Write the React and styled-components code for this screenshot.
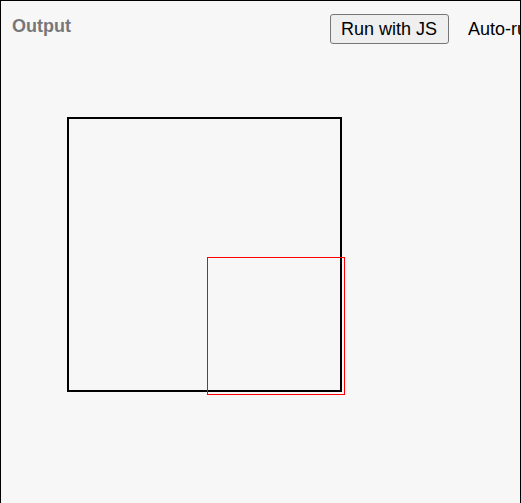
import React from "react";
import styled, { createGlobalStyle } from "styled-components";

const Global = createGlobalStyle`
  html, body { margin: 0; padding: 0; background: #ffffff; }
  body { font-family: "Liberation Sans", Arial, sans-serif; }
`;

const Panel = styled.div`
  box-sizing: border-box;
  width: 521px;
  height: 620px;
  border: 1px solid #000;
  background: #f7f7f7;
  overflow: hidden;
`;

const Header = styled.div`
  display: flex;
  align-items: flex-start;
  height: 56px;
  padding-top: 13px;
  box-sizing: border-box;
  white-space: nowrap;
`;

const Title = styled.div`
  flex: 0 0 329px;
  box-sizing: border-box;
  padding-left: 11px;
  margin-top: 2px;
  font-size: 18px;
  font-weight: bold;
  color: #777777;
`;

const Controls = styled.div`
  display: flex;
  align-items: center;
  gap: 19px;
  flex: none;
`;

const RunButton = styled.button`
  box-sizing: border-box;
  height: 30px;
  padding: 0 11px 0 10px;
  border: 1px solid #767676;
  border-radius: 3px;
  background: #efefef;
  color: #000;
  font-family: "Liberation Sans", Arial, sans-serif;
  font-size: 18px;
`;

const AutoLabel = styled.label`
  display: flex;
  align-items: center;
  gap: 4px;
  font-size: 18px;
  color: #000;
`;

const Stage = styled.svg`
  display: block;
`;

export default function App() {
  return (
    <>
      <Global />
      <Panel>
        <Header>
          <Title>Output</Title>
          <Controls>
            <RunButton>Run with JS</RunButton>
            <AutoLabel>
              Auto-run JS
              <input type="checkbox" defaultChecked />
            </AutoLabel>
          </Controls>
        </Header>
        <Stage width="519" height="440" viewBox="0 0 519 440">
          <rect x="67" y="61" width="273" height="273" fill="none" stroke="#000" strokeWidth="2" />
          <rect x="206.5" y="200.5" width="137" height="137" fill="none" stroke="#ff0000" strokeWidth="1" />
        </Stage>
      </Panel>
    </>
  );
}
